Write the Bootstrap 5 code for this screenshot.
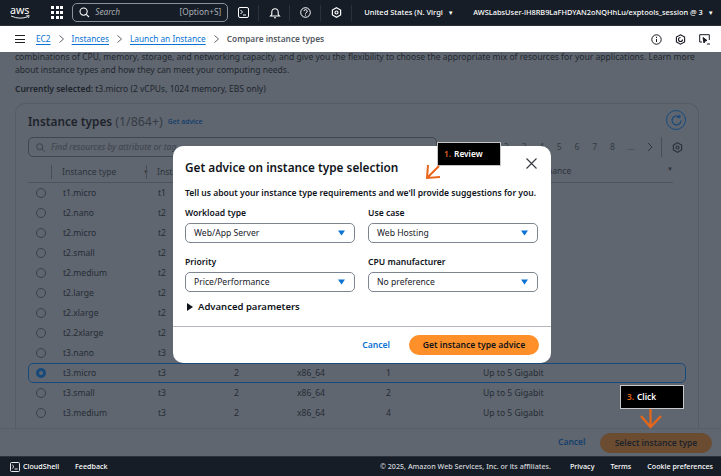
<!DOCTYPE html>
<html lang="en">
<head>
<meta charset="utf-8">
<title>Compare instance types</title>
<link href="https://cdn.jsdelivr.net/npm/bootstrap@5.3.0/dist/css/bootstrap.min.css" rel="stylesheet">
<style>
html,body{height:476px;overflow:hidden}
body{width:721px;font-family:"Noto Sans","Open Sans",sans-serif;font-size:8.6px;position:relative;background:#5f6670;color:#1d232b}
.shell-top{height:26px;background:#161d26;color:#fff;padding-left:10px;border-bottom:1px solid #2b323c}
.aws-logo{width:24px;height:16px;margin-right:17px;flex:none}
.waffle{display:grid;grid-template-columns:repeat(3,3px);gap:1.6px;margin-right:9px}
.waffle i{width:3px;height:3px;background:#fff;display:block}
.top-search{width:156px;height:19px;border:1px solid #8c929a;border-radius:5px;padding:0 6px;color:#a8adb3;margin-right:10px;font-size:8.3px}
.top-search em{margin-left:5px}
.top-ico{width:21px;margin-right:10px;flex:none;border-right:1px solid #2b323c;height:16px;display:flex;align-items:center}
.region{font-size:7.5px;margin-left:2px;width:109px;flex:none;font-weight:500;white-space:nowrap}
.account{font-size:7.4px;white-space:nowrap;font-weight:500;flex:none}
.tri{font-size:6px;margin-left:5px}
.crumbs{height:26px;background:#fff;padding:0 15px;font-size:8.3px;color:#545b64;flex:none}
.crumbs a{color:#0972d3;text-decoration:underline;text-underline-offset:2px}
.crumbs .sep{margin:0 8px;flex:none}
.crumbs b{font-weight:600}
.burger{width:10px;height:8px;border-top:1px solid #222;border-bottom:1px solid #222;position:relative;margin-right:11px}
.burger::after{content:"";position:absolute;left:0;right:0;top:2.5px;border-top:1px solid #222}
.crumb-tools{margin-left:auto;gap:13px;margin-right:-4px}
.main-dim{height:404px;overflow:hidden;position:relative;background:#5f6670;color:#262c34}
.intro{padding:0 15px;font-size:8.55px;line-height:13px;margin-top:-1px;color:#23282f;white-space:nowrap}
.selected-line{padding:0 15px;margin-top:5px;font-size:8.5px;color:#20252c;line-height:13px}
.selected-line b{font-weight:600}
.types-card{margin:8px 22px 0 15px;border:1px solid #555c66;border-bottom:0;border-radius:10px 10px 0 0;height:325px;padding:0 12px;overflow:hidden;position:relative}
.types-head{height:33px;padding-top:3px}
.types-head h2{font-size:11.8px;font-weight:600;margin:0;color:#1e232a}
.types-head h2 span{font-weight:400;color:#353b44;font-size:12.4px}
.types-head a{font-size:6.8px;color:#173f6b;text-decoration:none;font-weight:600;margin-left:5px}
.refresh-btn{position:absolute;right:12px;top:6px;width:20px;height:20px;border:1px solid #174a7c;border-radius:50%}
.filter-box{width:409px;height:20px;border:1px solid #3f4650;border-radius:5px;padding:0 7px;font-style:italic;font-size:8.5px;color:#3c424b;gap:6px}
.pager{position:absolute;right:15px;top:33px;height:20px;font-size:8.6px;gap:12.8px;color:#343a43}
.pager .rule{width:1px;height:20px;background:#474e58;margin:0 -3px 0 -5px}
.col-line{display:grid;grid-template-columns:34px 95px 76px 63px 89px 97px 1fr;align-items:center}
.col-line>span{white-space:nowrap}
.head-row{height:26px;padding-top:4px;border-bottom:1px solid #4d545e;color:#2d333b;font-size:8.6px;margin-right:13px}
.head-row .w{border-left:1px solid #474e58;padding-left:10px;margin-left:-11px;line-height:14px}
.body-row{height:20px;font-size:8.6px;color:#262c34;border:1px solid transparent;margin-right:13px}
.body-row.chosen{border:1px solid #174a7c;border-radius:5px;margin-right:0}
.radio-dot{width:10px;height:10px;border:1px solid #3a4049;border-radius:50%;margin-left:7px;display:block}
.chosen .radio-dot{border:3px solid #174a7c;background:#5f6670}
.action-bar{position:absolute;left:0;right:0;top:376px;height:28px;border-top:1px solid #565d67}
.act-cancel{position:absolute;left:558px;top:7px;color:#173f6b;font-weight:600;font-size:8.5px}
.act-select{position:absolute;left:600px;top:4px;width:112px;height:20px;border-radius:10px;background:#6b4c31;color:#1f242b;font-weight:600;font-size:8.5px;text-align:center;line-height:20px}
.shell-bottom{height:20px;background:#161d26;color:#fff;padding:0 8px 0 10px;font-size:7.15px;position:relative;border-top:1px solid #2b323c;font-weight:500}
.cs-ico{margin-right:3px}
.copy{margin-left:auto;color:#d5d8dc;margin-right:19px}
.advice-modal{position:absolute;left:173px;top:146px;width:378px;height:217px;background:#fff;border-radius:10px;color:#0f141a}
.advice-head{padding:12px 12px 0 12px;height:41px}
.advice-head h3{font-size:11.8px;font-weight:600;margin:0;line-height:18px}
.x-close{position:absolute;right:14px;top:12px}
.advice-lede{padding:0 12px;font-size:8.55px;font-weight:600;line-height:13px;white-space:nowrap}
.advice-grid{display:grid;grid-template-columns:170px 170px;column-gap:13px;row-gap:13px;padding:7px 12px 0}
.fld label{display:block;font-size:8.6px;font-weight:600;line-height:13px;margin-bottom:3px}
.pick{height:20px;border:1px solid #7d8590;border-radius:5px;padding:0 8px;font-size:8.6px;color:#16191f}
.pick svg{margin-left:auto;margin-right:1px}
.adv{padding:8px 0 0 13px;font-size:9.5px;font-weight:600;line-height:14px;position:relative}
.adv i{position:absolute;left:2px;top:11px;width:0;height:0;border-left:6px solid #0f141a;border-top:4px solid transparent;border-bottom:4px solid transparent}
.adv-wrap{padding:0 12px}
.advice-foot{position:absolute;left:0;right:0;top:180px;border-top:1px solid #b4b8bd;height:37px;padding-right:12px;gap:19px}
.foot-cancel{color:#0972d3;font-size:8.6px;font-weight:600}
.foot-go{width:130px;height:20px;border-radius:10px;background:#ff9029;color:#0f141a;font-size:8.6px;font-weight:600;text-align:center;line-height:20px;padding:0;border:0}
.note-tag{position:absolute;background:#000;color:#fff;font-size:8.3px;font-weight:600;border:1px solid #c7c7c7;padding-left:6px;display:flex;align-items:center}
.note-tag span{color:#e0641a;margin-right:3px}
.tag-one{left:437px;top:142px;width:64px;height:24px}
.tag-three{left:620px;top:385px;width:64px;height:24px}
.arrow-mark{position:absolute}
</style>
</head>
<body>
<div class="d-flex flex-column vh-100">
  <header class="shell-top d-flex align-items-center">
    <svg class="aws-logo" viewBox="0 0 24 16"><text x="0" y="9" font-family="Noto Sans,sans-serif" font-size="10.500" fill="#fff" textLength="19.500" lengthAdjust="spacingAndGlyphs">aws</text><path d="M1 11q9 4 17 .6" fill="none" stroke="#fff" stroke-width=".9"/><path d="M16.200 10.800l3-.3-.8 2.600" fill="none" stroke="#fff" stroke-width=".8"/></svg>
    <div class="waffle"><i></i><i></i><i></i><i></i><i></i><i></i><i></i><i></i><i></i></div>
    <div class="top-search d-flex align-items-center">
      <svg width="11" height="11" viewBox="0 0 11 11" fill="none" stroke="#fff" stroke-width="1.100"><circle cx="4.600" cy="4.600" r="3.600"/><path d="M7.300 7.300 10 10"/></svg>
      <em>Search</em><span class="ms-auto">[Option+S]</span>
    </div>
    <div class="top-ico"><svg width="11" height="11" viewBox="0 0 11 11" fill="none" stroke="#fff" stroke-width="1"><rect x=".5" y=".5" width="10" height="10" rx="1.500"/><path d="M2.500 3 4.500 5 2.500 7M5 8h3"/></svg></div>
    <div class="top-ico"><svg width="12" height="12" viewBox="0 0 12 12" fill="none" stroke="#fff" stroke-width="1.100"><path d="M1.500 9h9L9.200 7.500V5a3.200 3.200 0 0 0-6.400 0v2.500zM5 10.800h2"/></svg></div>
    <div class="top-ico"><svg width="11" height="11" viewBox="0 0 11 11" fill="none" stroke="#fff" stroke-width="1"><circle cx="5.500" cy="5.500" r="4.800"/><path d="M4 4.200a1.600 1.600 0 1 1 2.200 1.500c-.5.2-.7.5-.7 1M5.500 7.600v1"/></svg></div>
    <div class="top-ico"><svg width="11" height="11" viewBox="0 0 11 11" fill="none" stroke="#fff" stroke-width="1.200"><path d="M5.500 .8 9.600 3.100v4.800L5.500 10.200 1.400 7.900V3.100z"/><circle cx="5.500" cy="5.500" r="1.500"/></svg></div>
    <div class="region">United States (N. Virgi<span class="tri">▼</span></div>
    <div class="account">AWSLabsUser-iH8RB9LaFHDYAN2oNQHhLu/exptools_session @ 3<span class="tri">▼</span></div>
  </header>
  <nav class="crumbs d-flex align-items-center">
    <div class="burger"></div>
    <a href="#">EC2</a><svg class="sep" width="5" height="8" viewBox="0 0 5 8" fill="none" stroke="#5f6670"><path d="M.5.500 4.500 4 .5 7.500"/></svg><a href="#">Instances</a><svg class="sep" width="5" height="8" viewBox="0 0 5 8" fill="none" stroke="#5f6670"><path d="M.5.500 4.500 4 .5 7.500"/></svg><a href="#">Launch an Instance</a><svg class="sep" width="5" height="8" viewBox="0 0 5 8" fill="none" stroke="#5f6670"><path d="M.5.500 4.500 4 .5 7.500"/></svg><b>Compare instance types</b>
    <div class="crumb-tools d-flex align-items-center">
      <svg width="11" height="11" viewBox="0 0 11 11" fill="none" stroke="#16191f" stroke-width="1"><circle cx="5.500" cy="5.500" r="4.700"/><path d="M5.500 5v3M5.500 2.800v1.200"/></svg>
      <svg width="11" height="11" viewBox="0 0 11 11" fill="none" stroke="#16191f" stroke-width="1.100"><path d="M5.500 .8 9.600 3.100v4.800L5.500 10.200 1.400 7.900V3.100z"/><path d="M7.500 5.500A2 2 0 1 1 5.500 3.500"/></svg>
      <svg width="11" height="11" viewBox="0 0 11 11" fill="none" stroke="#16191f" stroke-width="1"><path d="M3 8H.7V.7h9.600V6"/><path d="M4 3.500 8 6.500 6 7 5 9zM8 10h3" fill="#16191f"/></svg>
    </div>
  </nav>
  <main class="main-dim">
    <div class="intro">combinations of CPU, memory, storage, and networking capacity, and give you the flexibility to choose the appropriate mix of resources for your applications. Learn more<br>about instance types and how they can meet your computing needs.</div>
    <div class="selected-line"><b>Currently selected:</b> t3.micro (2 vCPUs, 1024 memory, EBS only)</div>
    <section class="types-card">
      <div class="types-head d-flex align-items-center"><h2>Instance types <span>(1/864+)</span></h2><a href="#">Get advice</a></div>
      <div class="refresh-btn d-flex align-items-center justify-content-center"><svg width="13" height="13" viewBox="0 0 13 13" fill="none" stroke="#174a7c" stroke-width="1.200"><path d="M11 6.500A4.500 4.500 0 1 1 9.500 3.100"/><path d="M9.800 .8v2.600H7.200"/></svg></div>
      <div class="filter-box d-flex align-items-center"><svg width="9" height="9" viewBox="0 0 9 9" fill="none" stroke="#3c424b" stroke-width="1"><circle cx="3.700" cy="3.700" r="3"/><path d="M6 6 8.600 8.600"/></svg>Find resources by attribute or tag</div>
      <div class="pager d-flex align-items-center"><span>2</span><span>3</span><span>4</span><span>5</span><span>6</span><span>7</span><span>8</span><span>...</span><svg width="6" height="10" viewBox="0 0 6 10" fill="none" stroke="#2d333b"><path d="M1 1l4 4-4 4"/></svg><span class="rule"></span><svg width="11" height="11" viewBox="0 0 11 11" fill="none" stroke="#2d333b" stroke-width="1.200"><path d="M5.500 .8 9.600 3.100v4.800L5.500 10.200 1.400 7.900V3.100z"/><circle cx="5.500" cy="5.500" r="1.500"/></svg></div>
      <div class="col-line head-row"><span></span><span class="w d-flex align-items-center">Instance type<span class="tri ms-auto me-2">▼</span></span><span class="w">Instance family</span><span></span><span></span><span></span><span class="d-flex"><span>Network performance</span><span class="tri ms-auto">▼</span></span></div>
      <div class="col-line body-row"><span><i class="radio-dot"></i></span><span>t1.micro</span><span>t1</span></div>
      <div class="col-line body-row"><span><i class="radio-dot"></i></span><span>t2.nano</span><span>t2</span></div>
      <div class="col-line body-row"><span><i class="radio-dot"></i></span><span>t2.micro</span><span>t2</span></div>
      <div class="col-line body-row"><span><i class="radio-dot"></i></span><span>t2.small</span><span>t2</span></div>
      <div class="col-line body-row"><span><i class="radio-dot"></i></span><span>t2.medium</span><span>t2</span></div>
      <div class="col-line body-row"><span><i class="radio-dot"></i></span><span>t2.large</span><span>t2</span></div>
      <div class="col-line body-row"><span><i class="radio-dot"></i></span><span>t2.xlarge</span><span>t2</span></div>
      <div class="col-line body-row"><span><i class="radio-dot"></i></span><span>t2.2xlarge</span><span>t2</span></div>
      <div class="col-line body-row"><span><i class="radio-dot"></i></span><span>t3.nano</span><span>t3</span></div>
      <div class="col-line body-row chosen"><span><i class="radio-dot"></i></span><span>t3.micro</span><span>t3</span><span>2</span><span>x86_64</span><span>1</span><span>Up to 5 Gigabit</span></div>
      <div class="col-line body-row"><span><i class="radio-dot"></i></span><span>t3.small</span><span>t3</span><span>2</span><span>x86_64</span><span>2</span><span>Up to 5 Gigabit</span></div>
      <div class="col-line body-row"><span><i class="radio-dot"></i></span><span>t3.medium</span><span>t3</span><span>2</span><span>x86_64</span><span>4</span><span>Up to 5 Gigabit</span></div>
      <div class="col-line body-row"><span><i class="radio-dot"></i></span></div>
    </section>
    <div class="action-bar"><span class="act-cancel">Cancel</span><span class="act-select">Select instance type</span></div>
  </main>
  <footer class="shell-bottom d-flex align-items-center">
    <svg class="cs-ico" width="10" height="10" viewBox="0 0 10 10" fill="none" stroke="#fff" stroke-width=".9"><rect x=".5" y=".5" width="9" height="9" rx="1"/><path d="M2.200 2.800 4 4.600 2.200 6.400M4.600 7h3"/></svg>
    <span>CloudShell</span><span class="ms-3">Feedback</span>
    <span class="copy">© 2025, Amazon Web Services, Inc. or its affiliates.</span>
    <span class="d-flex gap-3"><span>Privacy</span><span>Terms</span><span>Cookie preferences</span></span>
  </footer>
</div>

<div class="advice-modal">
  <div class="advice-head"><h3>Get advice on instance type selection</h3></div>
  <svg class="x-close" width="11" height="11" viewBox="0 0 11 11" fill="none" stroke="#33383f" stroke-width="1.100"><path d="M.5.500l10 10M10.500.500l-10 10"/></svg>
  <p class="advice-lede m-0">Tell us about your instance type requirements and we'll provide suggestions for you.</p>
  <div class="advice-grid">
    <div class="fld"><label>Workload type</label><div class="pick d-flex align-items-center">Web/App Server<svg width="7" height="6" viewBox="0 0 7 6"><path d="M0 .5h7L3.500 5.500z" fill="#0972d3"/></svg></div></div>
    <div class="fld"><label>Use case</label><div class="pick d-flex align-items-center">Web Hosting<svg width="7" height="6" viewBox="0 0 7 6"><path d="M0 .5h7L3.500 5.500z" fill="#0972d3"/></svg></div></div>
    <div class="fld"><label>Priority</label><div class="pick d-flex align-items-center">Price/Performance<svg width="7" height="6" viewBox="0 0 7 6"><path d="M0 .5h7L3.500 5.500z" fill="#0972d3"/></svg></div></div>
    <div class="fld"><label>CPU manufacturer</label><div class="pick d-flex align-items-center">No preference<svg width="7" height="6" viewBox="0 0 7 6"><path d="M0 .5h7L3.500 5.500z" fill="#0972d3"/></svg></div></div>
  </div>
  <div class="adv-wrap"><div class="adv"><i></i>Advanced parameters</div></div>
  <div class="advice-foot d-flex align-items-center justify-content-end"><span class="foot-cancel">Cancel</span><button class="foot-go">Get instance type advice</button></div>
</div>

<div class="note-tag tag-one"><span>1.</span>Review</div>
<svg class="arrow-mark" style="left:425px;top:164px" width="20" height="16" viewBox="0 0 20 16" fill="none" stroke="#e8661a" stroke-width="2"><path d="M14 2 2 14M3 1 2 14l13-1"/></svg>
<div class="note-tag tag-three"><span>3.</span>Click</div>
<svg class="arrow-mark" style="left:639px;top:408px" width="24" height="22" viewBox="0 0 24 22" fill="none" stroke="#e8661a" stroke-width="2.200"><path d="M11.500 1v18M2 8l9.500 11L22 8"/></svg>
</body>
</html>
